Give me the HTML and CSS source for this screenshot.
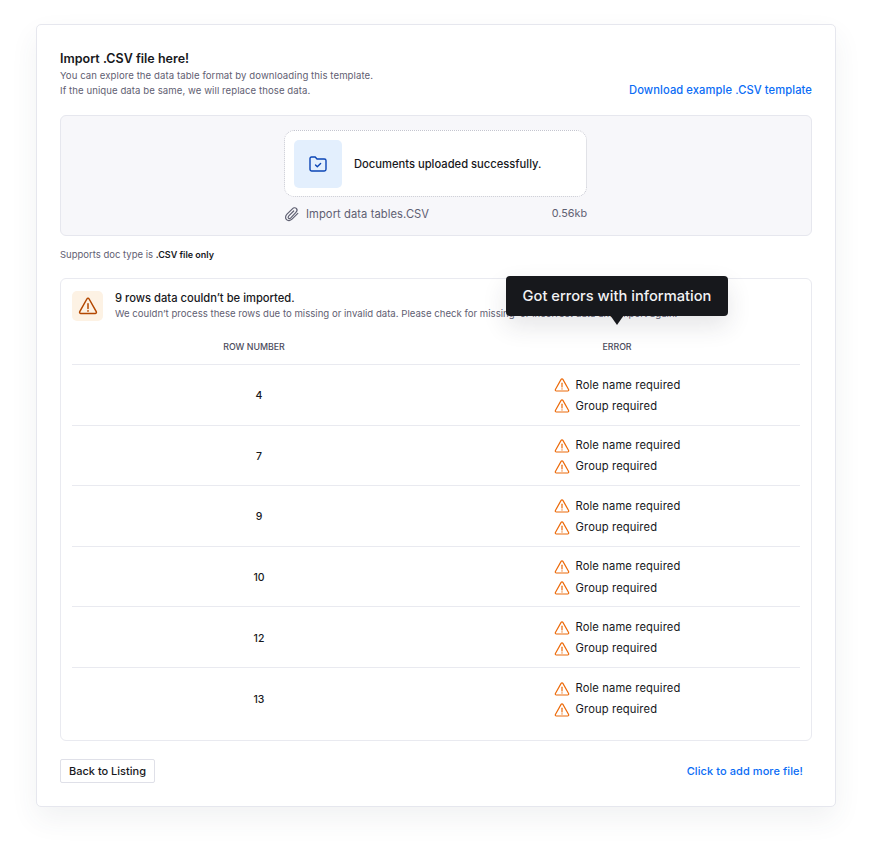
FILE: index.html
```html
<!DOCTYPE html>
<html lang="en">
<head>
    <meta charset="UTF-8">
    <meta name="viewport" content="width=device-width, initial-scale=1.0">
    <title>Import .CSV file</title>
    <link rel="stylesheet" href="styles.css">
</head>
<body>
    <svg class="icon-defs" width="0" height="0">
        <symbol id="warn" viewBox="0 0 16 16">
            <path d="M7.100 2.400c.4-.7 1.400-.7 1.800 0l5.700 10.100c.4.700-.1 1.500-.9 1.500H2.300c-.8 0-1.300-.8-.9-1.500L7.100 2.400Z" fill="none" stroke="currentColor" stroke-width="1.200" stroke-linejoin="round"/>
            <path d="M8 6.200v3.700" fill="none" stroke="currentColor" stroke-width="1.200" stroke-linecap="round"/>
            <circle cx="8" cy="11.900" r=".7" fill="currentColor"/>
        </symbol>
    </svg>

    <main class="card">
        <header class="top">
            <div>
                <h1>Import .CSV file here!</h1>
                <p class="sub">You can explore the data table format by downloading this template.</p>
                <p class="sub">If the unique data be same, we will replace those data.</p>
            </div>
            <a class="link" href="#">Download example .CSV template</a>
        </header>

        <section class="dropzone">
            <div class="upload-box">
                <div class="folder-tile">
                    <svg width="18" height="16" viewBox="0 0 18 16" fill="none" stroke="#0b45b5" stroke-width="1.400" stroke-linejoin="round" stroke-linecap="round">
                        <path d="M1 2.500C1 1.600 1.600 1 2.500 1h3.700l1.800 2h7.300c.9 0 1.700.7 1.700 1.600v8.700c0 .9-.8 1.700-1.700 1.700H2.700C1.800 15 1 14.200 1 13.300V2.500Z"/>
                        <path d="m6.500 9 1.800 1.800 3.300-3.200"/>
                    </svg>
                </div>
                <span class="upload-text">Documents uploaded successfully.</span>
            </div>
            <div class="file-row">
                <svg width="16" height="16" viewBox="0 0 16 16" fill="none" stroke="#5f6072" stroke-width="1.200" stroke-linecap="round">
                    <path d="M13.800 7.400 8 13.200c-1.700 1.700-4.100 1.900-5.500.5-1.400-1.400-1.200-3.800.5-5.500l5.400-5.400c1.200-1.200 2.900-1.400 3.900-.4s.8 2.700-.4 3.900L6.800 11.900c-.7.7-1.700.8-2.300.3-.6-.6-.4-1.600.3-2.300l4.900-4.900"/>
                </svg>
                <span class="file-name">Import data tables.CSV</span>
                <span class="file-size">0.56kb</span>
            </div>
        </section>

        <p class="support">Supports doc type is <strong>.CSV file only</strong></p>

        <section class="errors">
            <div class="tooltip">Got errors with information</div>
            <div class="errors-head">
                <div class="warn-tile">
                    <svg width="20" height="20"><use href="#warn"/></svg>
                </div>
                <div>
                    <h2>9 rows data couldn’t be imported.</h2>
                    <p class="sub">We couldn’t process these rows due to missing or invalid data. Please check for missing  or incorrect data and import again.</p>
                </div>
            </div>

            <div class="row row-head">
                <div class="cell first-head">ROW NUMBER</div>
                <div class="cell">ERROR</div>
            </div>

            <div class="row">
                <div class="cell num">4</div>
                <div class="cell"><ul class="err-list">
                    <li><svg width="16" height="16"><use href="#warn"/></svg>Role name required</li>
                    <li><svg width="16" height="16"><use href="#warn"/></svg>Group required</li>
                </ul></div>
            </div>
            <div class="row">
                <div class="cell num">7</div>
                <div class="cell"><ul class="err-list">
                    <li><svg width="16" height="16"><use href="#warn"/></svg>Role name required</li>
                    <li><svg width="16" height="16"><use href="#warn"/></svg>Group required</li>
                </ul></div>
            </div>
            <div class="row">
                <div class="cell num">9</div>
                <div class="cell"><ul class="err-list">
                    <li><svg width="16" height="16"><use href="#warn"/></svg>Role name required</li>
                    <li><svg width="16" height="16"><use href="#warn"/></svg>Group required</li>
                </ul></div>
            </div>
            <div class="row">
                <div class="cell num">10</div>
                <div class="cell"><ul class="err-list">
                    <li><svg width="16" height="16"><use href="#warn"/></svg>Role name required</li>
                    <li><svg width="16" height="16"><use href="#warn"/></svg>Group required</li>
                </ul></div>
            </div>
            <div class="row">
                <div class="cell num">12</div>
                <div class="cell"><ul class="err-list">
                    <li><svg width="16" height="16"><use href="#warn"/></svg>Role name required</li>
                    <li><svg width="16" height="16"><use href="#warn"/></svg>Group required</li>
                </ul></div>
            </div>
            <div class="row">
                <div class="cell num">13</div>
                <div class="cell"><ul class="err-list">
                    <li><svg width="16" height="16"><use href="#warn"/></svg>Role name required</li>
                    <li><svg width="16" height="16"><use href="#warn"/></svg>Group required</li>
                </ul></div>
            </div>
        </section>

        <footer class="bottom">
            <button type="button" class="back-button">Back to Listing</button>
            <a class="link more" href="#">Click to add more file!</a>
        </footer>
    </main>
</body>
</html>
```

FILE: styles.css
```css
* {
    box-sizing: border-box;
}
html, body {
    margin: 0;
    background: #fff;
}
body {
    font-family: Inter, "Open Sans", sans-serif;
    color: #17181c;
    padding: 24px 36px 0;
    height: 856px;
    overflow: hidden;
}
.icon-defs {
    position: absolute;
}
.card {
    width: 800px;
    height: 783px;
    padding: 24px 23px;
    background: #fff;
    border: 1px solid #e6e7ee;
    border-radius: 5px;
    box-shadow: 0 12px 28px rgba(60, 70, 90, 0.07);
}
.top {
    display: flex;
    justify-content: space-between;
    align-items: flex-end;
    height: 49px;
    padding-top: 1px;
}
h1 {
    margin: 0 0 1.500px;
    font-size: 12.500px;
    line-height: 16px;
    font-weight: 600;
}
h2 {
    margin: 0 0 2px;
    font-size: 11.200px;
    line-height: 14px;
    font-weight: 500;
}
.sub {
    margin: 0;
    font-size: 9.600px;
    letter-spacing: 0.070px;
    line-height: 15px;
    color: #5f6072;
}
.link {
    color: #0a6cf5;
    font-size: 11.200px;
    letter-spacing: 0.080px;
    font-weight: 500;
    line-height: 16px;
    text-decoration: none;
}
.dropzone {
    margin-top: 17px;
    height: 121px;
    padding-top: 14px;
    background: #f7f7fa;
    border: 1px solid #e6e7ee;
    border-radius: 6px;
    display: flex;
    flex-direction: column;
    align-items: center;
}
.upload-box {
    width: 303px;
    height: 67px;
    margin-right: 1px;
    padding: 8px 9px;
    display: flex;
    align-items: center;
    gap: 12px;
    background: #fff;
    border: 1px dotted #c4c5cf;
    border-radius: 10px;
}
.folder-tile {
    width: 48px;
    height: 48px;
    border-radius: 5px;
    background: #e3effd;
    display: flex;
    align-items: center;
    justify-content: center;
}
.upload-text {
    font-size: 11.200px;
    font-weight: 500;
}
.file-row {
    width: 303px;
    margin-top: 9px;
    margin-right: 1px;
    display: flex;
    align-items: center;
    gap: 6px;
    font-size: 11.200px;
    letter-spacing: 0.070px;
    line-height: 16px;
    color: #5f6072;
}
.file-size {
    margin-left: auto;
    letter-spacing: 0;
    font-size: 10.800px;
}
.support {
    margin: 12px 0 0;
    font-size: 9.500px;
    line-height: 14px;
    color: #5f6072;
}
.support strong {
    color: #17181c;
    font-size: 9px;
    font-weight: 600;
}
.errors {
    position: relative;
    margin-top: 16px;
    height: 463px;
    padding: 12px 11px 0;
    border: 1px solid #e9eaf0;
    border-radius: 6px;
}
.errors-head {
    display: flex;
    gap: 12px;
    height: 30px;
    align-items: center;
}
.warn-tile {
    width: 31px;
    height: 30px;
    border-radius: 5px;
    background: #fdf2e4;
    color: #b34700;
    display: flex;
    align-items: center;
    justify-content: center;
}
.errors-head .sub {
    white-space: pre;
    line-height: 14px;
    letter-spacing: 0.010px;
}
.tooltip {
    position: absolute;
    left: 445px;
    top: -3px;
    width: 222px;
    height: 40px;
    background: #17181c;
    color: #f2f2f4;
    border-radius: 4px;
    font-size: 14.700px;
    font-weight: 500;
    line-height: 40px;
    text-align: center;
    box-shadow: 0 10px 24px rgba(40, 45, 60, 0.12);
    z-index: 2;
}
.tooltip::after {
    content: "";
    position: absolute;
    left: 104px;
    bottom: -9px;
    border-left: 7px solid transparent;
    border-right: 7px solid transparent;
    border-top: 10px solid #17181c;
}
.row {
    display: grid;
    grid-template-columns: 374px 342px;
    align-items: center;
    height: 60.600px;
    padding-top: 2px;
    border-bottom: 1px solid #e9eaf0;
}
.row:last-child {
    border-bottom: none;
}
.row-head {
    height: 44px;
    padding-top: 7px;
    font-size: 8.800px;
    color: #4b4c5c;
    font-weight: 500;
}
.cell {
    text-align: center;
}
.first-head {
    padding-right: 10px;
}
.num {
    font-size: 10.500px;
    font-weight: 500;
}
.err-list {
    list-style: none;
    margin: 0 auto;
    padding: 0;
    width: 127px;
    text-align: left;
    font-size: 11.200px;
    letter-spacing: 0.130px;
    line-height: 21.300px;
}
.err-list li {
    display: flex;
    align-items: center;
    gap: 6px;
    white-space: nowrap;
    color: #17181c;
}
.err-list svg {
    color: #ec6a0a;
    flex: none;
}
.bottom {
    margin-top: 18px;
    display: flex;
    justify-content: space-between;
    align-items: center;
    height: 24px;
}
.back-button {
    width: 95px;
    height: 24px;
    padding: 0;
    background: #fff;
    border: 1px solid #dfe0e8;
    border-radius: 2px;
    color: #17181c;
    font-family: inherit;
    font-size: 11px;
    font-weight: 500;
}
.more {
    margin-right: 9px;
    font-size: 11px;
}
```
